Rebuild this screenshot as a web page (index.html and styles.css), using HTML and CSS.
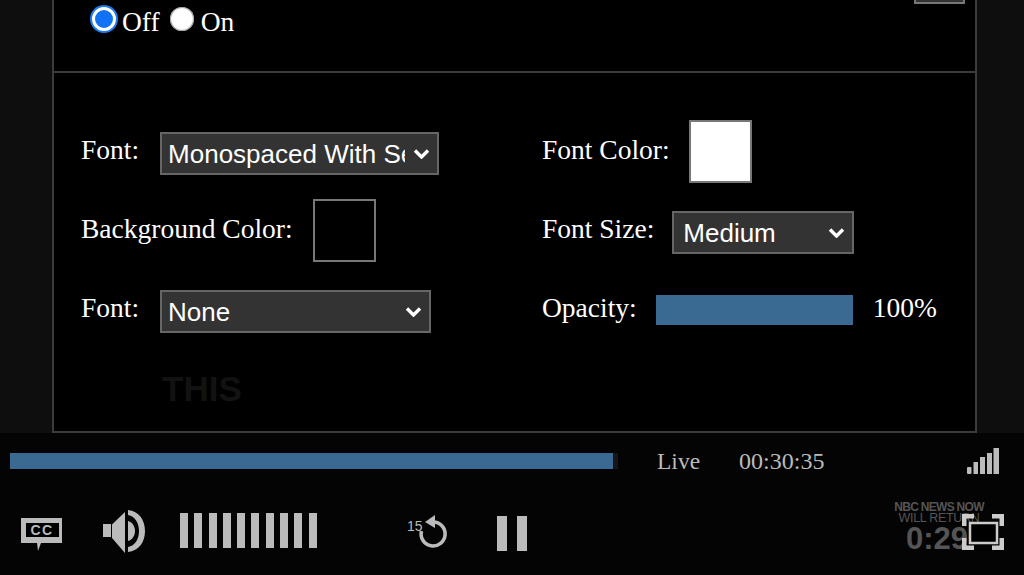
FILE: index.html
```html
<!DOCTYPE html>
<html lang="en">
<head>
<meta charset="utf-8">
<title>Player captions settings</title>
<link rel="stylesheet" href="styles.css">
</head>
<body>
<main class="stage">
  <section class="panel">
    <div class="toggle-row">
      <label class="radio-option"><input class="radio radio-on" type="radio" name="cc" checked>Off</label>
      <label class="radio-option"><input class="radio" type="radio" name="cc">On</label>
      <div class="clipped-box"></div>
    </div>
    <div class="settings">
      <div class="field">
        <span class="label">Font:</span>
        <div class="select-box select-wide">
          <select><option>Monospaced With Serifs</option></select>
          <svg class="chevron" viewBox="0 0 17 11"><path d="M2 2.5l6.5 6.5L15 2.5" fill="none" stroke="#fff" stroke-width="3.4"/></svg>
        </div>
      </div>
      <div class="field">
        <span class="label">Font Color:</span>
        <div class="swatch swatch-white"></div>
      </div>
      <div class="field">
        <span class="label">Background Color:</span>
        <div class="swatch"></div>
      </div>
      <div class="field">
        <span class="label">Font Size:</span>
        <div class="select-box select-size">
          <select><option>Medium</option></select>
          <svg class="chevron" viewBox="0 0 17 11"><path d="M2 2.5l6.5 6.5L15 2.5" fill="none" stroke="#fff" stroke-width="3.4"/></svg>
        </div>
      </div>
      <div class="field">
        <span class="label">Font:</span>
        <div class="select-box select-none">
          <select><option>None</option></select>
          <svg class="chevron" viewBox="0 0 17 11"><path d="M2 2.5l6.5 6.5L15 2.5" fill="none" stroke="#fff" stroke-width="3.4"/></svg>
        </div>
      </div>
      <div class="field">
        <span class="label">Opacity:</span>
        <div class="opacity-bar"></div>
        <span class="label">100%</span>
      </div>
    </div>
    <div class="ghost">THIS</div>
  </section>
</main>
<footer class="controls">
  <div class="video-slate">
    <div class="slate-title">NBC NEWS NOW</div>
    <div class="slate-sub">WILL RETURN</div>
    <div class="slate-time">0:29</div>
  </div>
  <div class="status-row">
    <div class="progress"><div class="progress-fill"></div></div>
    <span class="live">Live</span>
    <span class="clock">00:30:35</span>
    <svg class="signal" width="32" height="26" viewBox="0 0 32 26" fill="#bbb">
      <rect x="0" y="19" width="4.5" height="7" rx="1"/>
      <rect x="6.5" y="14" width="4.5" height="12"/>
      <rect x="13" y="9" width="5" height="17"/>
      <rect x="20" y="5" width="5" height="21"/>
      <rect x="26.500" y="0" width="5.500" height="26"/>
    </svg>
  </div>
  <div class="button-row">
    <svg class="icon-cc" width="41" height="50" viewBox="0 0 41 50">
      <path d="M0 11h41v25H20l-3 8-1-8H0z" fill="#bbb"/>
      <rect x="5" y="16" width="33" height="14" fill="#000"/>
      <text x="21" y="28" text-anchor="middle" class="cc-text">CC</text>
    </svg>
    <svg class="icon-speaker" width="43" height="50" viewBox="0 0 43 50">
      <rect x="0" y="17" width="8" height="13" fill="#bbb"/>
      <path d="M9 17.500L22 5v41L9 31z" fill="#bbb"/>
      <path d="M25 3c11 1 17 10 17 21s-6 20-17 21v-5c7-1 11-8 11-16S32 9 25 8z" fill="#bbb"/>
      <path d="M25 14c4 1 7 5 7 10s-3 9-7 10z" fill="#bbb"/>
    </svg>
    <div class="volume">
      <i></i><i></i><i></i><i></i><i></i><i></i><i></i><i></i><i></i><i></i>
    </div>
    <svg class="icon-replay" width="42" height="50" viewBox="0 0 42 50">
      <path d="M26 15A12 12 0 1 1 14.500 24" fill="none" stroke="#bbb" stroke-width="3.600"/>
      <path d="M28 8v13L18 15z" fill="#bbb"/>
      <text x="0" y="24" class="replay-text">15</text>
    </svg>
    <svg class="icon-pause" width="30" height="50" viewBox="0 0 30 50" fill="#bbb">
      <rect x="0" y="9" width="10" height="35"/>
      <rect x="20" y="9" width="10" height="35"/>
    </svg>
    <svg class="icon-full" width="42" height="50" viewBox="0 0 42 50">
      <rect x="8" y="16" width="27" height="20" fill="#000" stroke="#ccc" stroke-width="2.500"/>
      <path d="M0 19V7h12v4.500H4.500V19zM30 7h12v12h-4.500v-7.500H30zM0 31h4.500v7.500H12V43H0zM37.500 31H42v12H30v-4.500h7.500z" fill="#ccc"/>
    </svg>
  </div>
</footer>
</body>
</html>
```
FILE: styles.css
```css
* { box-sizing: border-box; }

html, body {
  margin: 0;
  height: 575px;
  overflow: hidden;
  background: #040404;
}

body {
  display: flex;
  flex-direction: column;
  font-family: "Liberation Serif", serif;
  color: #fff;
  font-size: 27.5px;
}

.stage {
  height: 433px;
  padding: 0 47px 0 52px;
  background: #0e0e0e;
  flex: none;
}

.panel {
  height: 433px;
  background: #000;
  border: 2px solid #3c3c3c;
  border-top: 0;
  overflow: hidden;
}

.toggle-row {
  height: 73px;
  border-bottom: 2px solid #3c3c3c;
  padding: 0 10px 0 38px;
  display: flex;
  align-items: flex-start;
}

.radio-option {
  display: flex;
  align-items: flex-start;
  line-height: 32px;
  padding-top: 6px;
  margin-right: 10px;
}

.radio {
  appearance: none;
  width: 24px;
  height: 24px;
  margin: 1px 7px 0 0;
  border-radius: 50%;
  background: #fff;
  box-shadow: inset 0 0 1px 1px #999;
}

.radio-on {
  margin-right: 6px;
  background: #1272f5;
  border: 3px solid #fff;
  box-shadow: 0 0 0 2px #1e78ee;
}

.clipped-box {
  margin-left: auto;
  width: 51px;
  height: 4px;
  background: #333;
  border: 2px solid #777;
  border-top: 0;
}

.settings {
  display: grid;
  grid-template-columns: 461px 1fr;
  grid-auto-rows: 79px;
  padding: 39px 0 0 27px;
}

.field {
  display: flex;
  align-items: center;
  gap: 20px;
}

.label { margin-bottom: 3px; }

.select-box {
  position: relative;
  height: 43px;
  margin: 3px 0 0 1px;
}

.select-box select {
  appearance: none;
  display: block;
  width: 100%;
  height: 100%;
  margin: 0;
  padding: 2px 32px 0 6px;
  background: #333;
  color: #fff;
  border: 2px solid #666;
  border-radius: 0;
  font-family: "Liberation Sans", Arial, sans-serif;
  font-size: 26px;
}

.select-wide { width: 279px; }
.select-size { width: 182px; margin-left: -2px; }
.select-size select { padding-left: 9px; }
.select-none { width: 271px; }

.chevron {
  position: absolute;
  right: 9px;
  top: 16px;
  width: 17px;
  height: 11px;
}

.swatch {
  width: 63px;
  height: 63px;
  border: 2px solid #777;
  background: #000;
}

.swatch-white {
  background: #fff;
  margin-left: -1px;
}

.opacity-bar {
  width: 197px;
  height: 30px;
  margin-left: -1px;
  background: #3a6a91;
}

.ghost {
  margin: 20px 0 0 108px;
  font-family: "Liberation Sans", Arial, sans-serif;
  font-weight: 700;
  font-size: 35px;
  line-height: 40px;
  color: #121212;
}

.controls {
  position: relative;
  flex: 1;
  background: #040404;
  padding-top: 12px;
}

.status-row {
  display: flex;
  align-items: center;
  height: 32px;
  padding: 0 25px 0 10px;
  margin-bottom: 30px;
  color: #bbb;
}

.progress {
  width: 608px;
  height: 16px;
  background: #161616;
}

.progress-fill {
  width: 603px;
  height: 100%;
  background: #3a6a91;
}

.live {
  margin-left: 39px;
  font-size: 23.5px;
}

.clock {
  margin-left: 39px;
  font-size: 24px;
}

.signal { margin-left: auto; }

.button-row {
  display: flex;
  height: 50px;
  padding: 0 20px 0 21px;
}

.button-row svg { flex: none; }

.icon-speaker { margin-left: 41px; }

.volume {
  display: flex;
  gap: 6.3px;
  height: 35px;
  margin: 6px 0 0 34px;
}

.volume i {
  display: block;
  width: 8px;
  background: #bbb;
}

.icon-replay { margin-left: 90px; }
.icon-pause { margin-left: 48px; }

.icon-full {
  position: relative;
  margin-left: auto;
}

.cc-text {
  font: 700 14px "Liberation Sans", Arial, sans-serif;
  letter-spacing: 1.5px;
  fill: #bbb;
}

.replay-text {
  font: 400 14px "Liberation Sans", Arial, sans-serif;
  fill: #bbb;
}

.video-slate {
  position: absolute;
  left: 890px;
  top: 69px;
  width: 98px;
  text-align: center;
  font-family: "Liberation Sans", Arial, sans-serif;
  font-weight: 700;
  color: #555;
}

.slate-title {
  font-size: 12px;
  line-height: 11px;
  letter-spacing: -0.7px;
}

.slate-sub {
  font-size: 12.5px;
  font-weight: 400;
  line-height: 11px;
  letter-spacing: -0.3px;
}

.slate-time {
  font-size: 31px;
  line-height: 32px;
  margin-top: -1px;
  margin-left: -4px;
}
```
